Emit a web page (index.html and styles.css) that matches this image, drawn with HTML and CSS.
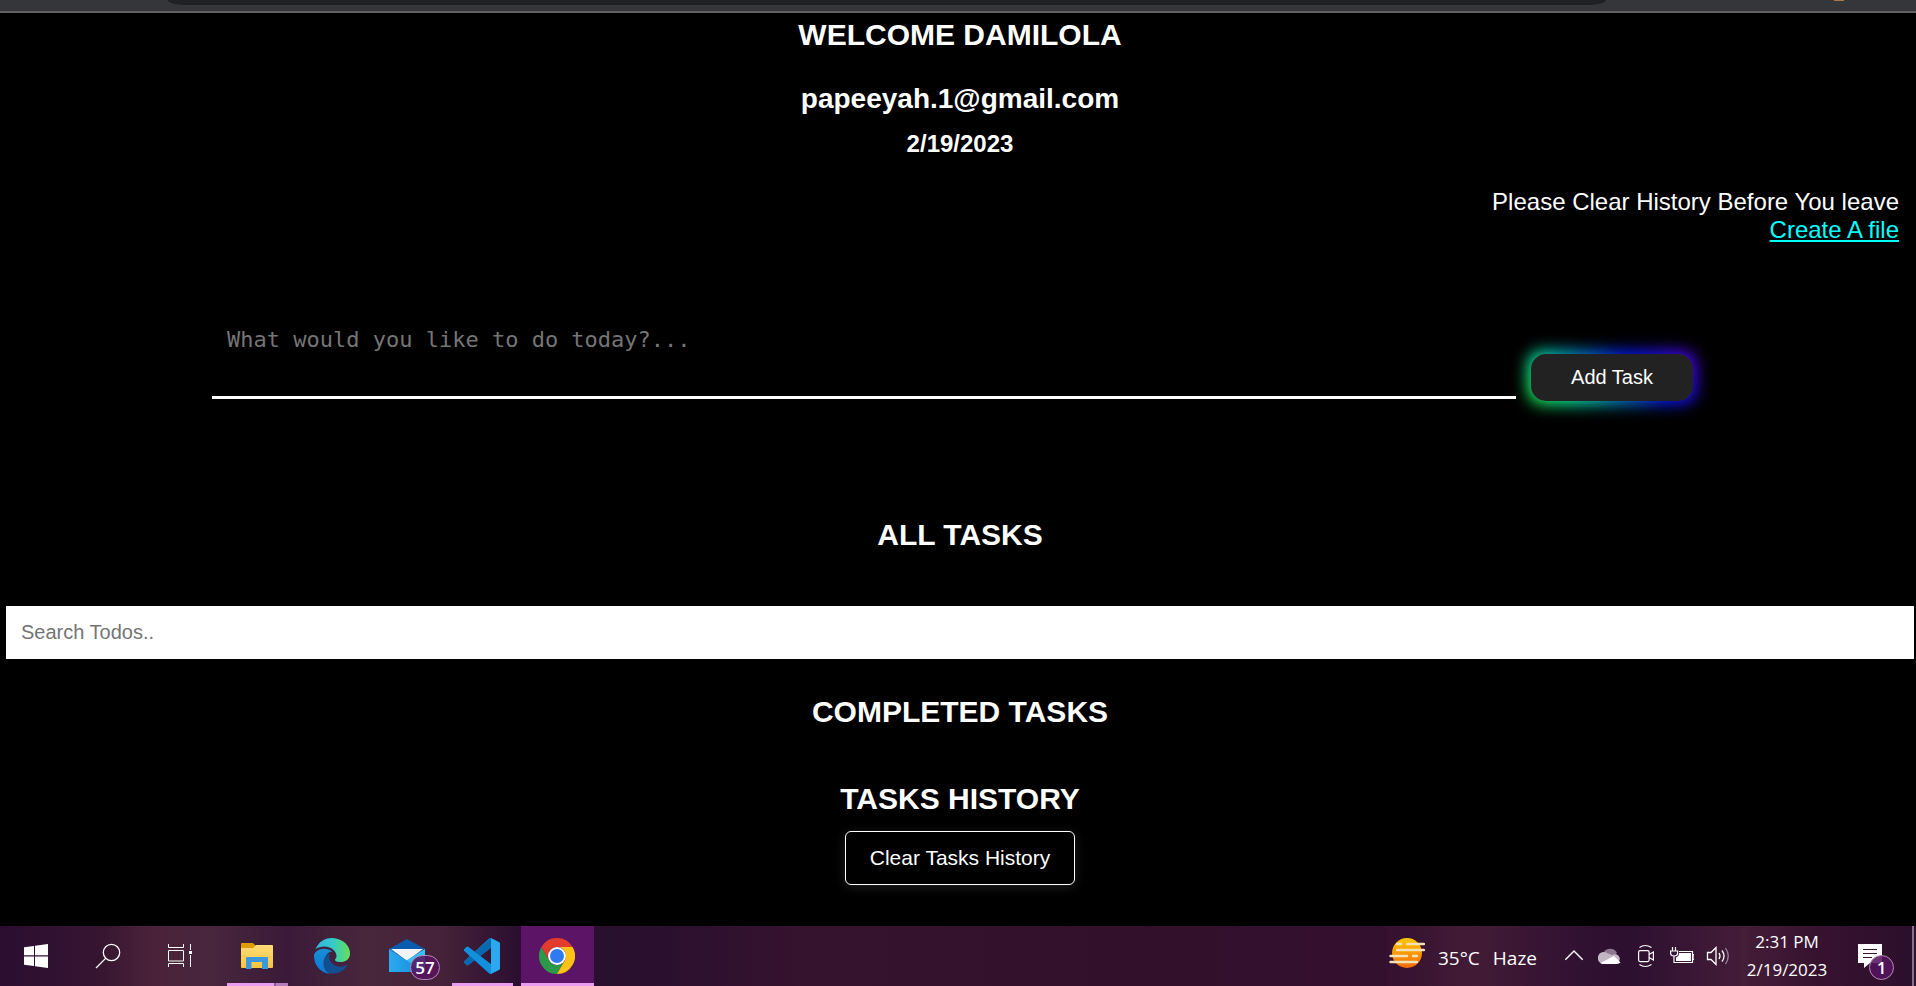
FILE: index.html
```html
<!DOCTYPE html>
<html lang="en">
<head>
<meta charset="utf-8">
<title>Todo App</title>
<link rel="stylesheet" href="styles.css">
</head>
<body>
<div class="browser-edge"><div class="address-bar"></div><div class="avatar"></div></div>
<main class="page">
  <header class="intro">
    <h1 class="heading">WELCOME DAMILOLA</h1>
    <h2 class="email">papeeyah.1@gmail.com</h2>
    <h3 class="date">2/19/2023</h3>
  </header>
  <div class="notice">
    <p>Please Clear History Before You leave</p>
    <a class="file-link" href="#">Create A file</a>
  </div>
  <form class="task-form">
    <textarea class="task-input" aria-label="New task" placeholder="What would you like to do today?..."></textarea>
    <button class="add-button" type="button">Add Task</button>
  </form>
  <section class="all-tasks">
    <h2 class="heading">ALL TASKS</h2>
    <input class="search" type="text" aria-label="Search todos" placeholder="Search Todos..">
  </section>
  <section class="completed"><h2 class="heading">COMPLETED TASKS</h2></section>
  <section class="history">
    <h2 class="heading">TASKS HISTORY</h2>
    <button class="clear-button" type="button">Clear Tasks History</button>
  </section>
</main>
<footer class="taskbar">
  <div class="system">
    <button class="bar-button" aria-label="Start"><svg class="icon" viewBox="0 0 36 36"><path fill="#fff" d="M6 9.3l10-1.4V17.3H6zM17 7.700L30 6v11.300H17zM6 18.500h10V28L6 26.700zM17 18.500h13V30l-13-1.800z"/></svg></button>
    <button class="bar-button" aria-label="Search"><svg class="icon" viewBox="0 0 36 36"><g fill="none" stroke="#fff" stroke-width="1.3"><circle cx="21.5" cy="14.5" r="8.2"/><path d="M15.600 20.400L6 30"/></g></svg></button>
    <button class="bar-button" aria-label="Task view"><svg class="icon" viewBox="0 0 36 36"><path fill="none" stroke="#fff" d="M6.500 6v3.500h15V6M6.500 12.500h15v10.500h-15zM6.500 29v-3.500h15V29M28.500 6v6M28.500 17v12"/><path fill="#fff" d="M27 13h3v3h-3z"/></svg></button>
  </div>
  <div class="apps">
    <button class="bar-button app stacked" aria-label="File Explorer"><svg class="icon" viewBox="0 0 36 36"><defs><linearGradient id="fold" x2="0" y2="1"><stop stop-color="#ffdc78"/><stop offset="1" stop-color="#fbc53c"/></linearGradient></defs><path fill="#e19c07" d="M2 6a1 1 0 0 1 1-1h11l3 3v4H2z"/><path fill="url(#fold)" d="M2 10h12l3-3h16a1 1 0 0 1 1 1v21a1 1 0 0 1-1 1H3a1 1 0 0 1-1-1z"/><path fill="#3b97de" d="M7 31V20a1 1 0 0 1 1-1h20a1 1 0 0 1 1 1v11h-6v-7H12.500v7z"/></svg></button>
    <button class="bar-button app" aria-label="Edge"><svg class="icon" viewBox="0 0 24 24"><defs><linearGradient id="e1" x2="1"><stop stop-color="#2fb5e6"/><stop offset=".5" stop-color="#35c9c8"/><stop offset="1" stop-color="#65e05a"/></linearGradient><linearGradient id="e2" x2="0" y2="1"><stop stop-color="#188fd5"/><stop offset="1" stop-color="#0a78d8"/></linearGradient></defs><path fill="#114f91" d="M21.860 17.860q.140 0 .250.120.100.130.100.250t-.110.330l-.320.460-.430.530-.440.500-.600.650q-.580.530-1.340 1.040-.760.510-1.600.910-.860.400-1.740.640t-1.670.240Q12 24 9.500 23.300 6 20 6.500 15 8 11 10.500 10.500q-.9 3.300.7 5.400 2 2.900 6 3.200 2.200 0 4.200-1l.2-.1z"/><path fill="url(#e2)" d="M6.360 16.590q0 1.100.270 2.150.270 1.060.780 2.030.510.960 1.240 1.770.740.820 1.660 1.400-1.470-.2-2.800-.740-1.330-.550-2.480-1.370-1.150-.830-2.080-1.900-.920-1.070-1.580-2.330T.360 14.940Q0 13.540 0 12.060q0-.810.320-1.490.310-.680.830-1.230.530-.550 1.200-.960.660-.4 1.350-.660.740-.270 1.500-.390.780-.120 1.550-.120.700 0 1.420.1.720.120 1.400.350.680.230 1.320.570.630.350 1.160.830-.350 0-.7.070-.330.070-.650.230-.630.260-1.200.720-.570.460-1.050 1.040-.480.580-.870 1.260-.380.670-.650 1.390-.270.710-.420 1.440-.150.720-.150 1.380z"/><path fill="url(#e1)" d="M11.960.060q1.700 0 3.330.390 1.630.380 3.070 1.150 1.430.770 2.620 1.930 1.180 1.160 1.980 2.700.490.940.760 1.960.280 1 .280 2.080 0 .890-.230 1.700-.240.800-.690 1.480-.450.680-1.100 1.220-.640.530-1.450.880-.540.240-1.110.360-.580.130-1.160.130-.420 0-.970-.03-.540-.03-1.100-.120-.550-.100-1.050-.280-.5-.190-.840-.5-.120-.09-.230-.240-.1-.160-.1-.330 0-.150.160-.350.160-.2.350-.5.200-.280.360-.680.160-.4.160-.950 0-1.060-.4-1.960-.4-.910-1.060-1.640-.660-.740-1.520-1.280-.860-.550-1.790-.890-.840-.3-1.720-.440-.870-.140-1.760-.140-1.550 0-3.060.450T.940 7.550q.710-1.740 1.810-3.130 1.100-1.380 2.520-2.350Q6.680 1.100 8.370.580q1.700-.520 3.580-.520Z"/></svg></button>
    <button class="bar-button app" aria-label="Mail, 57 unread"><svg class="icon" viewBox="0 0 36 36"><defs><linearGradient id="m" x2="1"><stop stop-color="#2aaaf0"/><stop offset="1" stop-color="#1489d8"/></linearGradient></defs><path fill="#0a5cb0" d="M0 11L18 1l18 10v4H0z"/><path fill="#f4f4f4" d="M2 11h32L18 23z"/><path fill="#35c1f8" d="M36 11v23H22l-4-12z"/><path fill="url(#m)" d="M0 11l36 23H0z"/></svg><span class="badge count">57</span></button>
    <button class="bar-button app open" aria-label="Visual Studio Code"><svg class="icon" viewBox="0 0 24 24"><path fill="#0f83cf" d="M23.150 2.587L18.210.210a1.494 1.494 0 0 0-1.705.290l-9.460 8.630-4.120-3.128a.999.999 0 0 0-1.276.057L.327 7.261A1 1 0 0 0 .326 8.740L3.899 12 .326 15.260a1 1 0 0 0 .001 1.479L1.650 17.940a.999.999 0 0 0 1.276.057l4.120-3.128 9.460 8.630a1.492 1.492 0 0 0 1.704.290l4.942-2.377A1.500 1.500 0 0 0 24 20.060V3.939a1.500 1.500 0 0 0-.850-1.352zm-5.146 14.861L10.826 12l7.178-5.448v10.896z"/><path fill="#0869b0" d="M18 .100L7.050 9.130 2.900 12.800.330 15.300a1 1 0 0 0 0 1.440l1.320 1.200a1 1 0 0 0 1.280.060L18 6.550z"/><path fill="#1290de" d="M.330 7.260l1.320-1.200a1 1 0 0 1 1.280-.06L18 17.450V24L3.900 12 .330 8.740a1 1 0 0 1 0-1.480z"/><path fill="#2aa9f1" d="M18 .100l5.150 2.490a1.500 1.500 0 0 1 .850 1.350v16.120a1.500 1.500 0 0 1-.850 1.350L18 23.900z"/></svg></button>
    <button class="bar-button app open active" aria-label="Chrome"><svg class="icon" viewBox="0 0 36 36"><path fill="#2a9a48" d="M2.410 9A18 18 0 0 0 18 36l7.800-13.500a9 9 0 0 1-15.600 0z"/><path fill="#e33b2e" d="M2.410 9a18 18 0 0 1 31.180 0H18a9 9 0 0 0-7.800 13.500z"/><path fill="#fdc213" d="M33.590 9A18 18 0 0 1 18 36l7.800-13.500A9 9 0 0 0 18 9z"/><circle cx="18" cy="18" r="9" fill="#fff"/><circle cx="18" cy="18" r="7" fill="#2f7af0"/></svg></button>
  </div>
  <div class="tray">
    <button class="weather"><svg class="icon" viewBox="0 0 36 36"><defs><linearGradient id="sun" x2="0" y2="1"><stop stop-color="#ffc800"/><stop offset="1" stop-color="#f46a0a"/></linearGradient></defs><circle cx="18" cy="15" r="15" fill="url(#sun)"/><path fill="none" stroke="#f3e2b8" stroke-width="2.4" stroke-linecap="round" d="M8 6h4M18 6h17M8 12h27M1.500 18H18M24 18h4M1.500 24H28"/></svg><span>35°C</span><span>Haze</span></button>
    <div class="tray-icons">
      <svg class="tray-icon" viewBox="0 0 24 36"><path fill="none" stroke="#fff" stroke-width="1.4" d="M3.300 21.700L12 13l8.700 8.700"/></svg>
      <svg class="tray-icon" viewBox="0 0 24 36"><path fill="#8e7890" d="M5 16a7.500 7.500 0 0 1 14-1l-7 6z"/><path fill="#c4b6c4" d="M5 26a6 6 0 1 1 4-11l7 3-8 8z"/><path fill="#c4b6c4" d="M14 17a5 5 0 1 1 4 9z"/><path fill="#fff" d="M2.500 25L16 18l6.500 6.500a5 5 0 0 1-3.500 1.500H6a6 6 0 0 1-3.500-1z"/></svg>
      <svg class="tray-icon" viewBox="0 0 24 36"><g fill="none" stroke="#fff" stroke-width="1.2"><rect x="4.6" y="12.6" width="10.5" height="11" rx="1.5"/><path d="M15 16.500l4.400-2.500v8L15 19.500M5.500 9.500q5.500-4 12 0M5.500 26.500q5.500 4 12 0"/></g></svg>
      <svg class="tray-icon" viewBox="0 0 24 36"><path fill="none" stroke="#fff" stroke-width="1.2" d="M2.500 9v4M5.500 9v4M.6 13h7v2q0 3-3.500 3-3.500 0-3.500-3zM4 18v6.500h18.500v-11H9M22.500 16.500H24v5h-1.500"/><path fill="#fff" d="M9 15h12v8H6v-3.500q3-1 3-4.500z"/></svg>
      <svg class="tray-icon" viewBox="0 0 24 36"><g fill="none" stroke="#fff" stroke-width="1.3"><path d="M1.500 14.500h3.500l5-5v17l-5-5H1.500zM13 15q2 3 0 6M16 12.500q4 5.500 0 11"/><path stroke="#9a859b" d="M19.500 10q5.500 8 0 16"/></g></svg>
    </div>
    <button class="clock"><span>2:31 PM</span><span>2/19/2023</span></button>
    <button class="alerts" aria-label="Notifications"><svg class="icon" viewBox="0 0 36 36"><path fill="#fff" d="M6 6h24v19H18l-6 5v-5H6z"/><path stroke="#38152f" d="M11 11.500h14M11 15.500h14M11 19.500h9"/></svg><span class="badge one">1</span></button>
  </div>
</footer>
</body>
</html>
```
FILE: styles.css
```css
* { box-sizing: border-box; }
body {
  margin: 0;
  min-height: 100vh;
  display: flex;
  flex-direction: column;
  background: #000;
  color: #fff;
  font-family: "Liberation Sans", Arial, sans-serif;
}
h1, h2, h3, p { margin: 0; }
button { border: 0; padding: 0; background: none; color: inherit; font: inherit; }

.browser-edge {
  display: flex;
  height: 13px;
  padding: 0 72px 0 168px;
  background: #35363a;
  border-bottom: 2px solid #606064;
}
.address-bar { flex: 1; height: 5px; background: #202124; border-radius: 0 0 16px 16px / 0 0 5px 5px; }
.avatar { width: 10px; height: 1px; margin-left: 228px; background: #a87850; }

.page { flex: 1; display: flex; flex-direction: column; padding: 5px 2px 38px 6px; }
.heading { font-size: 30px; line-height: 34px; text-align: center; }
.intro { text-align: center; }
.email { margin-top: 31px; font-size: 28px; line-height: 32px; }
.date { margin-top: 15px; font-size: 24px; line-height: 28px; }
.notice { margin-top: 30px; padding-right: 15px; font-size: 24px; line-height: 28px; text-align: right; }
.file-link { color: #00ffff; }

.task-form { display: flex; align-items: flex-end; gap: 15px; margin-top: 68px; padding: 0 221px 0 206px; }
.task-input {
  flex: 1;
  min-width: 0;
  height: 87px;
  margin-bottom: 2px;
  padding: 14px 15px;
  border: 0;
  border-bottom: 3px solid #fff;
  background: transparent;
  color: #fff;
  font: 22px/28px "DejaVu Sans Mono", monospace;
  resize: none;
  outline: 0;
}
.task-input::placeholder, .search::placeholder { color: #757575; opacity: 1; }
.add-button {
  position: relative;
  z-index: 0;
  width: 162px;
  height: 47px;
  font-size: 20px;
  border-radius: 15px;
  background: #222;
}
.add-button::before {
  content: "";
  position: absolute;
  z-index: -2;
  inset: -3px;
  border-radius: 15px;
  background: linear-gradient(45deg, #24ff3c, #00ffb5 24%, #0018ff 65%, #1c10ff 76%, #6400ff);
  filter: blur(8px);
}
.add-button::after {
  content: "";
  position: absolute;
  z-index: -1;
  inset: 0;
  border-radius: 15px;
  background: #222;
}

.all-tasks { margin-top: 117px; }
.search {
  display: block;
  width: 100%;
  height: 53px;
  margin-top: 54px;
  padding: 0 15px;
  border: 0;
  background: #fff;
  color: #000;
  font: 20px "Liberation Sans", Arial, sans-serif;
}
.completed { margin-top: 36px; }
.history { display: flex; flex-direction: column; align-items: center; margin-top: 53px; }
.clear-button {
  width: 230px;
  height: 54px;
  margin-top: 15px;
  border: 1px solid #fff;
  border-radius: 6px;
  font-size: 21px;
  box-shadow: 0 2px 12px rgba(255, 255, 255, .12);
}

.taskbar {
  display: flex;
  height: 60px;
  background: linear-gradient(90deg, #2c0e32 0, #351430 5%, #4a233a 8%, #48263e 11%, #3a1a38 15%, #48263c 19%, #452239 23%, #2c0f30 27%, #28102f 32%, #35122e 42%, #32102b 60%, #34102f 72%, #421c36 77%, #321132 82%, #2d0f30 85%, #441d38 91%, #36122f 95%, #2c0f2c);
  font-family: "Open Sans", "Noto Sans", sans-serif;
}
.system, .apps, .tray, .tray-icons { display: flex; }
.bar-button { display: flex; align-items: center; justify-content: center; width: 72px; height: 60px; }
.icon { display: block; flex: none; width: 36px; height: 36px; }
.apps { gap: 2px; margin-left: 5px; }
.app { position: relative; width: 73px; padding-right: 2px; }
.open::after, .stacked::after {
  content: "";
  position: absolute;
  left: 6px;
  right: 6px;
  bottom: 0;
  height: 3px;
  background: #ea9cf0;
}
.stacked::after { background: linear-gradient(90deg, #ea9cf0 47px, #8a5a92 47px 49px, #b67dbc 49px); }
.active { background: #5b1466; }
.active::after { left: 0; right: 0; }

.badge {
  position: absolute;
  display: flex;
  align-items: center;
  justify-content: center;
  height: 25px;
  border: 1px solid #b38ab5;
  border-radius: 13px;
  background: #56145fdd;
  font-weight: 600;
}
.count { left: 39px; top: 29px; width: 30px; font-size: 17px; }
.one { right: -6px; top: 17px; width: 25px; font-size: 17px; }

.tray { margin-left: auto; align-items: center; padding-right: 2px; height: 60px; }
.weather { display: flex; align-items: center; width: 173px; gap: 13px; font-size: 19px; line-height: 28px; }
.weather span { padding-top: 4px; }
.tray-icons { gap: 12px; }
.tray-icon { width: 24px; height: 36px; }
.clock { display: flex; flex-direction: column; align-items: center; width: 116px; padding-right: 2px; font-size: 17px; line-height: 28px; }
.alerts { position: relative; display: flex; align-items: center; margin: 0 24px 0 6px; }
.tray::after { content: ""; width: 2px; height: 60px; background: #87708a; }
```
